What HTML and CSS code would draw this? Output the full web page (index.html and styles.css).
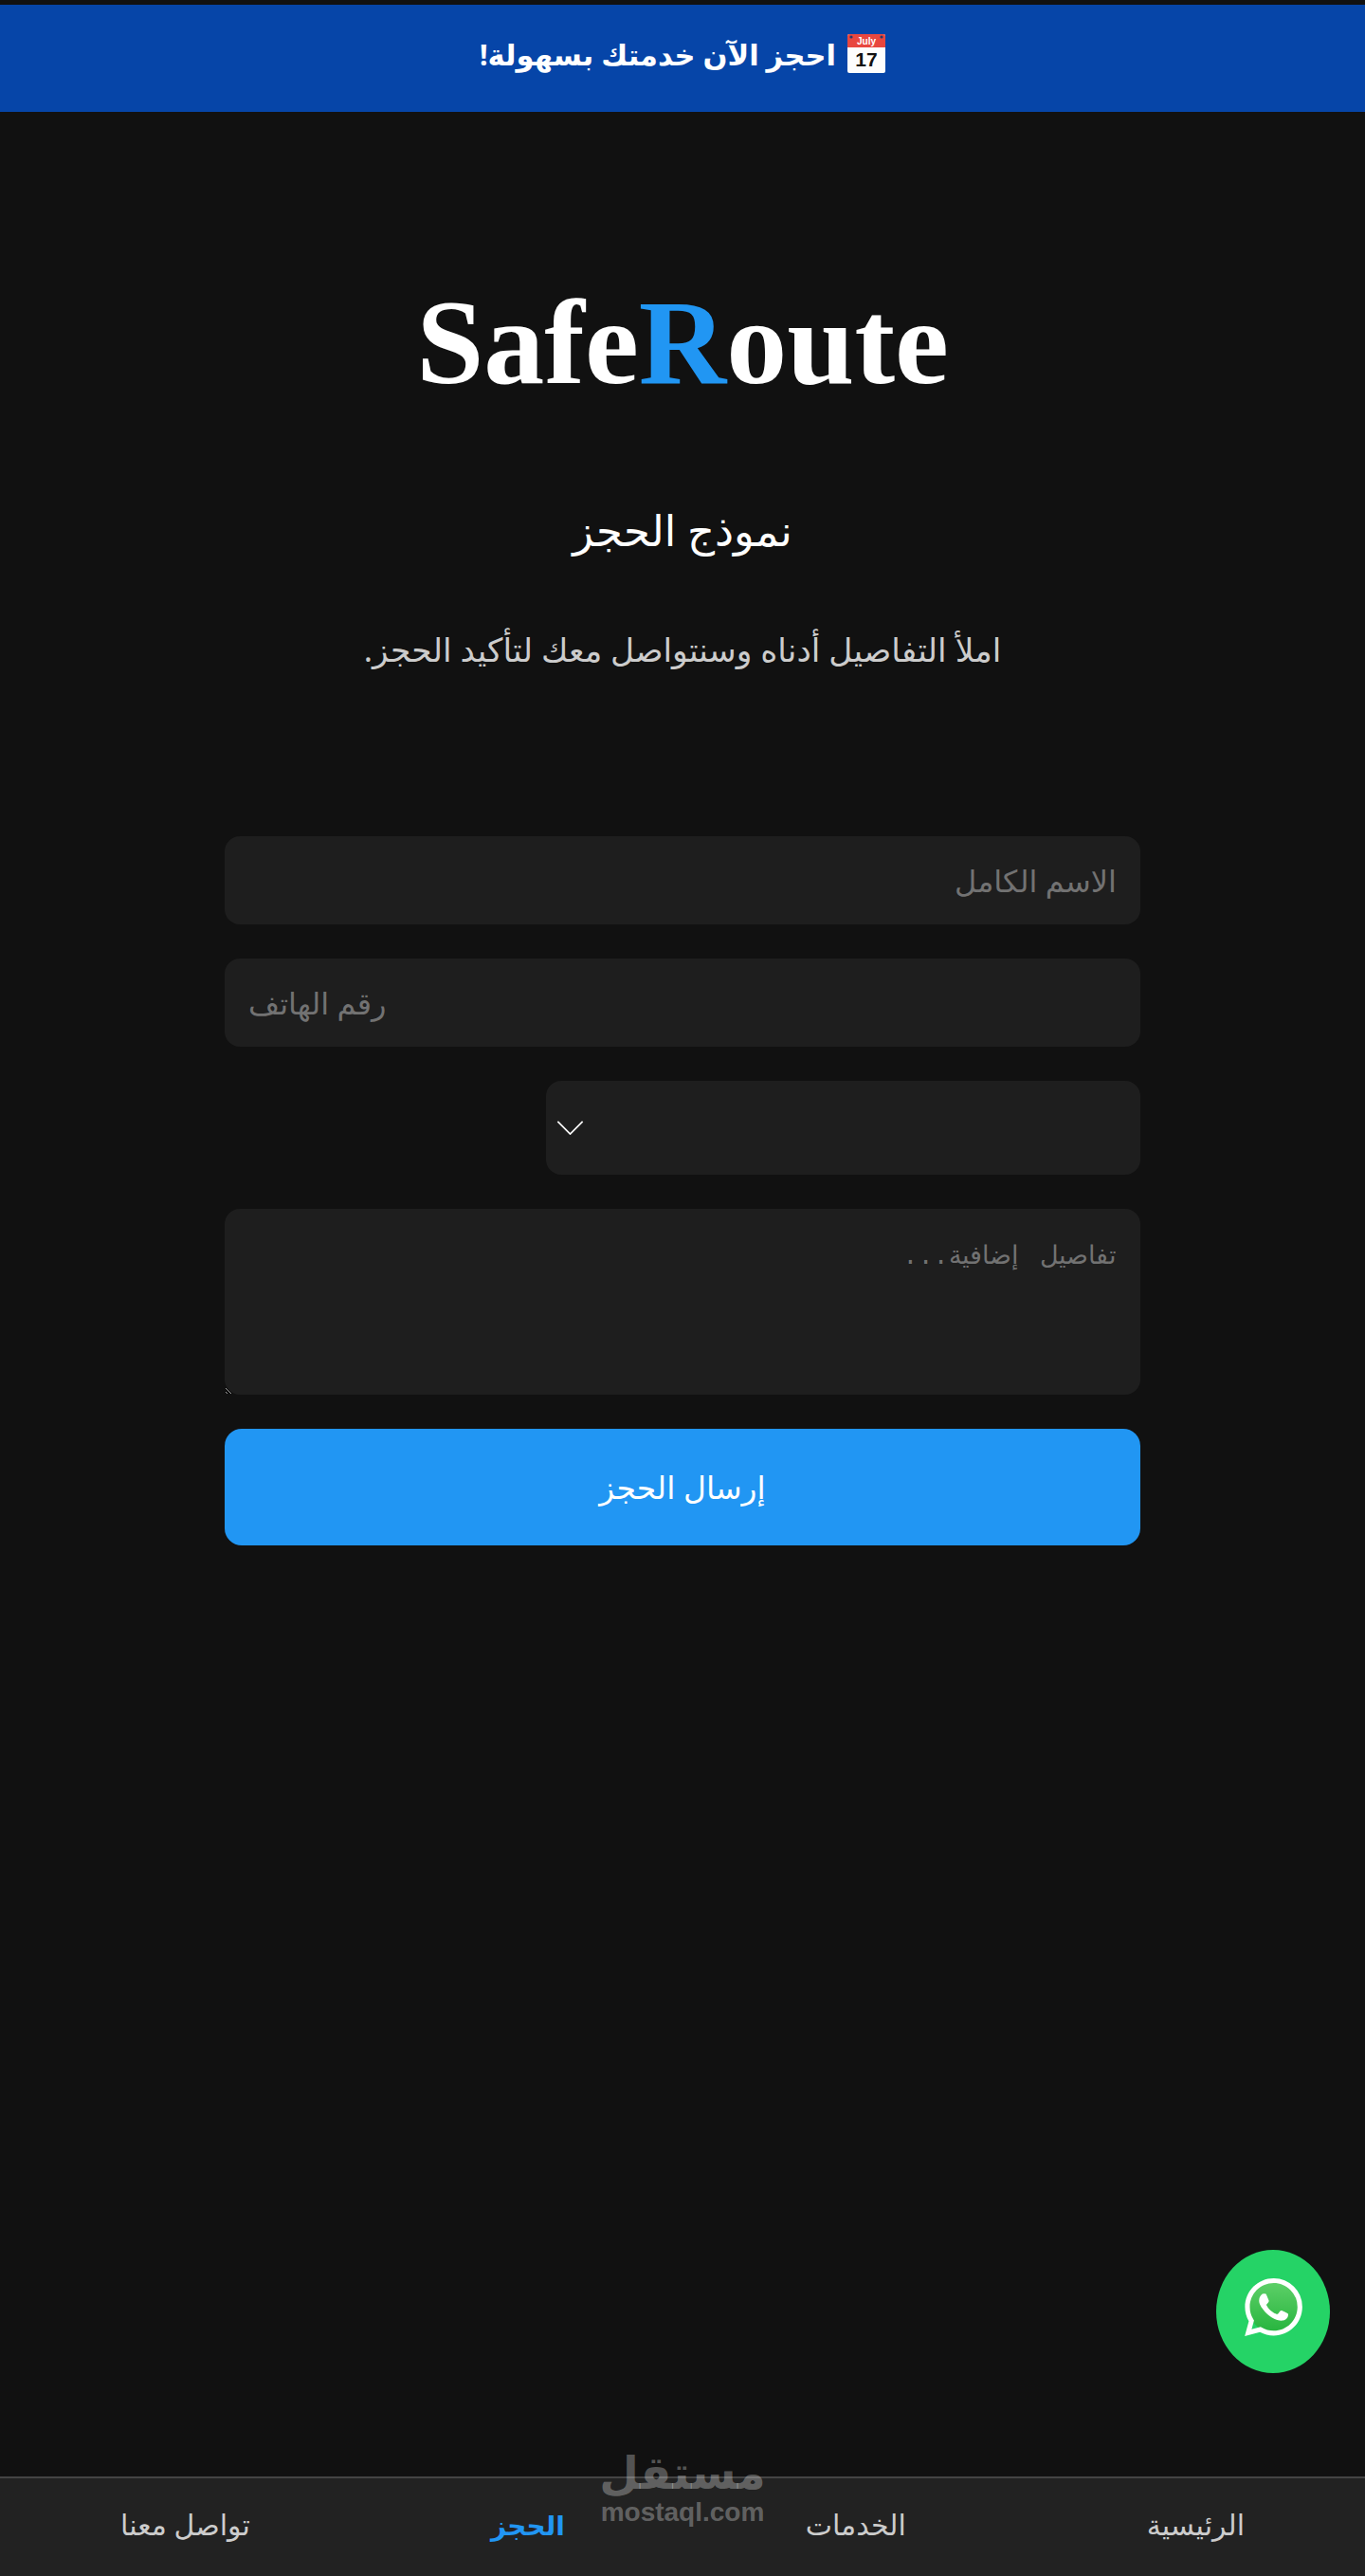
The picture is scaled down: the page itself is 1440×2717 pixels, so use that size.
FILE: index.html
```html
<!DOCTYPE html>
<html lang="ar" dir="rtl">
<head>
  <meta charset="UTF-8">
  <title>SafeRoute - نموذج الحجز</title>
  <link rel="stylesheet" href="styles.css">
</head>
<body>

  <div class="banner">
    <svg class="banner-icon" viewBox="0 0 40 41" aria-hidden="true">
      <rect x="0" y="0" width="40" height="41" rx="2" fill="#fdfdfd"/>
      <path d="M2 0h36a2 2 0 0 1 2 2v12H0V2a2 2 0 0 1 2-2z" fill="#e8473f"/>
      <circle cx="4" cy="3" r="1.6" fill="#2a3a6a"/>
      <circle cx="36" cy="3" r="1.6" fill="#2a3a6a"/>
      <text x="20" y="11" text-anchor="middle" class="icon-month">July</text>
      <text x="20" y="34" text-anchor="middle" class="icon-day">17</text>
    </svg>
    <span>احجز الآن خدمتك بسهولة!</span>
  </div>

  <div class="container">
    <h1 class="logo" dir="ltr">Safe<span class="logo-accent">R</span>oute</h1>
    <h2 class="title">نموذج الحجز</h2>
    <p class="subtitle">املأ التفاصيل أدناه وسنتواصل معك لتأكيد الحجز.</p>

    <form class="booking-form">
      <input class="field" type="text" placeholder="الاسم الكامل">
      <input class="field field-phone" type="tel" placeholder="رقم الهاتف">
      <div class="select-wrap">
        <select class="field field-select"></select>
        <svg class="select-arrow" viewBox="0 0 30 16" aria-hidden="true">
          <path d="M1 1l14 14L29 1" fill="none" stroke="#fff" stroke-width="1.8"/>
        </svg>
      </div>
      <textarea class="field field-notes" placeholder="تفاصيل إضافية..."></textarea>
      <button class="submit" type="submit">إرسال الحجز</button>
    </form>
  </div>

  <a class="whatsapp" href="#" aria-label="WhatsApp">
    <svg viewBox="0 0 24 24" aria-hidden="true">
      <defs>
        <linearGradient id="waFill" x1="0" y1="0" x2="0" y2="1">
          <stop offset="0" stop-color="#5dd068"/>
          <stop offset="1" stop-color="#27b43e"/>
        </linearGradient>
      </defs>
      <circle cx="12" cy="12" r="10.5" fill="url(#waFill)"/>
      <path fill="#fff" d="M17.472 14.382c-.297-.149-1.758-.867-2.03-.967-.273-.099-.471-.148-.67.15-.197.297-.767.966-.94 1.164-.173.199-.347.223-.644.075-.297-.15-1.255-.463-2.39-1.475-.883-.788-1.48-1.761-1.653-2.059-.173-.297-.018-.458.13-.606.134-.133.298-.347.446-.52.149-.174.198-.298.298-.497.099-.198.05-.371-.025-.52-.075-.149-.669-1.612-.916-2.207-.242-.579-.487-.5-.669-.51-.173-.008-.371-.01-.57-.01-.198 0-.52.074-.792.372-.272.297-1.04 1.016-1.04 2.479 0 1.462 1.065 2.875 1.213 3.074.149.198 2.096 3.2 5.077 4.487.709.306 1.262.489 1.694.625.712.227 1.36.195 1.871.118.571-.085 1.758-.719 2.006-1.413.248-.694.248-1.289.173-1.413-.074-.124-.272-.198-.57-.347m-5.421 7.403h-.004a9.87 9.87 0 01-5.031-1.378l-.361-.214-3.741.982.998-3.648-.235-.374a9.86 9.86 0 01-1.51-5.26c.001-5.45 4.436-9.884 9.888-9.884 2.64 0 5.122 1.03 6.988 2.898a9.825 9.825 0 012.893 6.994c-.003 5.45-4.437 9.884-9.885 9.884m8.413-18.297A11.815 11.815 0 0012.05 0C5.495 0 .16 5.335.157 11.892c0 2.096.547 4.142 1.588 5.945L.057 24l6.305-1.654a11.882 11.882 0 005.683 1.448h.005c6.554 0 11.89-5.335 11.893-11.893a11.821 11.821 0 00-3.48-8.413z"/>
    </svg>
  </a>

  <div class="bottom-nav">
    <a href="#">الرئيسية</a>
    <a href="#">الخدمات</a>
    <a href="#" class="active">الحجز</a>
    <a href="#">تواصل معنا</a>
  </div>

  <div class="watermark">
    <div class="watermark-ar">مستقل</div>
    <div class="watermark-en">mostaql.com</div>
  </div>

</body>
</html>
```

FILE: styles.css
```css
html, body {
  height: 100%;
}

body {
  font-family: "Noto Sans", "DejaVu Sans", sans-serif;
  background: #111;
  color: #fff;
  margin: 0;
  padding: 5px 0 0;
  box-sizing: border-box;
  display: flex;
  flex-direction: column;
  position: relative;
  overflow: hidden;
}

.banner {
  background-color: #0645a8;
  height: 113px;
  display: flex;
  justify-content: center;
  align-items: center;
  gap: 12px;
  font-size: 30.5px;
  font-weight: bold;
  padding-bottom: 10px;
  box-sizing: border-box;
}

.banner-icon {
  width: 40px;
  height: 41px;
}

.icon-month {
  font-family: "Liberation Sans", sans-serif;
  font-size: 10px;
  font-weight: bold;
  fill: #fff;
}

.icon-day {
  font-family: "Liberation Sans", sans-serif;
  font-size: 21px;
  font-weight: bold;
  fill: #111;
}

.container {
  flex: 1;
  width: 966px;
  margin: 0 auto;
}

.logo {
  font-family: "Liberation Serif", serif;
  font-size: 128px;
  font-weight: bold;
  line-height: 150px;
  text-align: center;
  margin: 168px 0 0;
}

.logo-accent {
  color: #2196f3;
}

.title {
  font-size: 45px;
  font-weight: normal;
  line-height: 60px;
  text-align: center;
  margin: 93px 0 0;
}

.subtitle {
  font-size: 34.5px;
  line-height: 50px;
  color: #ccc;
  text-align: center;
  margin: 71px 0 0;
}

.booking-form {
  display: flex;
  flex-direction: column;
  gap: 36px;
  margin-top: 172px;
}

.field {
  display: block;
  width: 100%;
  height: 93px;
  box-sizing: border-box;
  padding: 0 25px;
  background: #1e1e1e;
  border: none;
  border-radius: 16px;
  color: #fff;
  font-family: inherit;
  font-size: 32px;
}

.field::placeholder {
  color: #727272;
}

.field-phone {
  direction: ltr;
  text-align: left;
}

.select-wrap {
  position: relative;
  width: 627px;
  height: 99px;
}

.field-select {
  height: 99px;
  appearance: none;
}

.select-arrow {
  position: absolute;
  left: 11px;
  top: 42px;
  width: 29px;
  height: 15px;
}

.field-notes {
  height: 196px;
  padding: 33px 25px;
  font-family: "Liberation Mono", "Noto Sans", sans-serif;
  font-size: 27px;
  word-spacing: 6px;
}

.submit {
  height: 123px;
  background-color: #2196f3;
  color: white;
  border: none;
  border-radius: 18px;
  font-family: inherit;
  font-size: 33px;
  cursor: pointer;
}

.whatsapp {
  position: absolute;
  left: 1283px;
  top: 2373px;
  width: 120px;
  height: 130px;
  border-radius: 50%;
  background: #25d366;
  display: flex;
  justify-content: center;
  align-items: center;
}

.whatsapp svg {
  width: 61px;
  height: 61px;
  margin-bottom: 10px;
}

.bottom-nav {
  height: 105px;
  box-sizing: border-box;
  background: #222;
  border-top: 2px solid #444;
  padding-bottom: 6px;
  display: flex;
  justify-content: space-around;
  align-items: center;
}

.bottom-nav a {
  color: #ccc;
  text-decoration: none;
  font-size: 30px;
}

.bottom-nav a.active {
  color: #2196f3;
  font-weight: bold;
  font-size: 28px;
}

.watermark {
  position: absolute;
  left: 620px;
  top: 2578px;
  width: 200px;
  text-align: center;
  color: rgba(255, 255, 255, 0.3);
  font-weight: bold;
}

.watermark-ar {
  font-size: 48px;
  line-height: 58px;
}

.watermark-en {
  font-family: "Liberation Sans", sans-serif;
  font-size: 28px;
  line-height: 28px;
}
```
